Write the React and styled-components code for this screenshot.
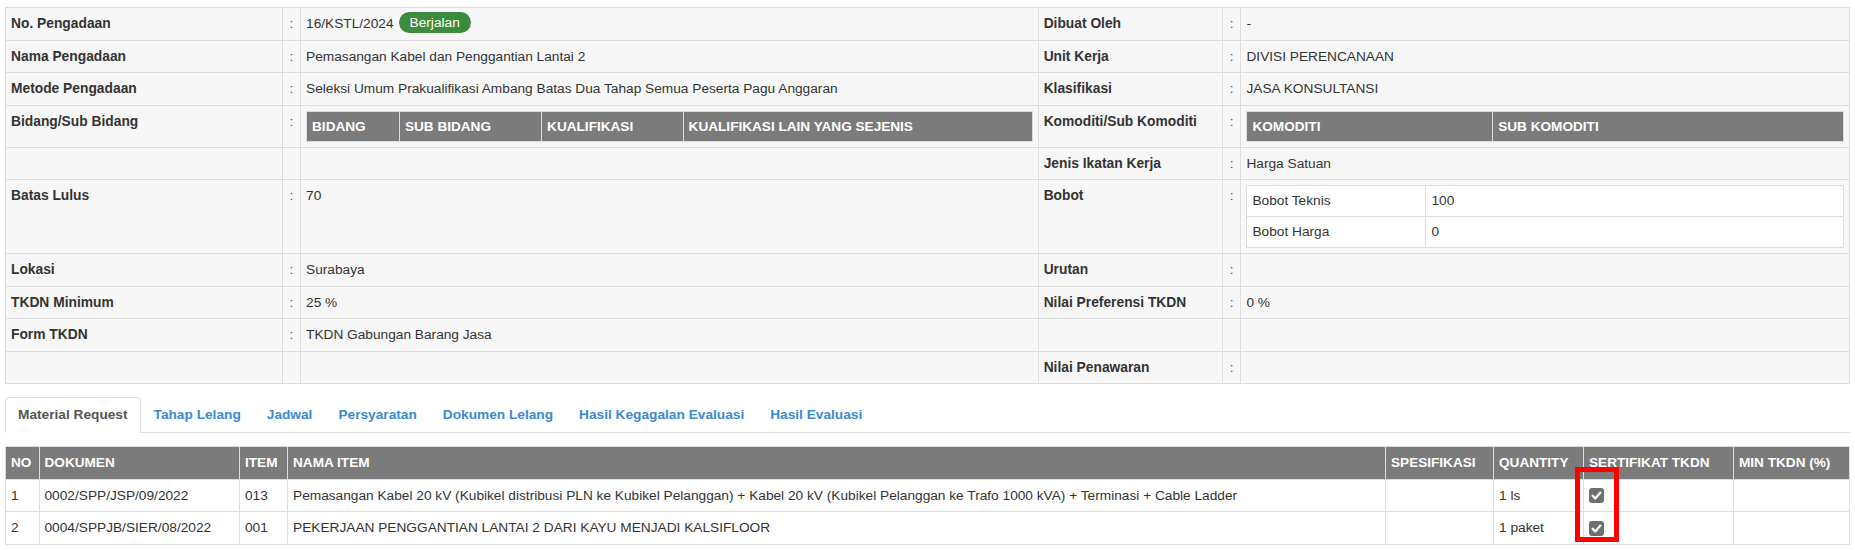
import React from 'react';
import styled, { createGlobalStyle } from 'styled-components';

const GlobalStyle = createGlobalStyle`
  html, body {
    margin: 0;
    padding: 0;
    background: #fff;
  }
  body {
    font-family: "Liberation Sans", Arial, sans-serif;
    font-size: 13.7px;
    line-height: 20px;
    color: #333;
  }
  * { box-sizing: border-box; }
`;

const Page = styled.div`
  padding: 7px 5px 0 5px;
`;

const InfoTable = styled.table`
  width: 100%;
  border-collapse: collapse;
  table-layout: fixed;
  background: #f7f7f7;
  border: 1px solid #ddd;
`;

const Cell = styled.td`
  border: 1px solid #ddd;
  padding: ${p => (p.$nest ? '5px' : '6px 5px 5.5px')};
  vertical-align: top;
  text-align: ${p => (p.$center ? 'center' : 'left')};
  font-weight: ${p => (p.$bold ? 'bold' : 'normal')};
  font-size: ${p => (p.$bold ? '13.8px' : '13.7px')};
  color: ${p => (p.$center ? '#555' : '#333')};
`;

const SubTable = styled.table`
  width: 100%;
  border-collapse: collapse;
  table-layout: fixed;
  background: ${p => (p.$white ? '#fff' : 'transparent')};
  border: 1px solid #ddd;
`;

const SubHead = styled.th`
  background: #7b7b7b;
  color: #fff;
  font-weight: bold;
  font-size: 13.6px;
  text-align: left;
  padding: 5px 5px 4px;
  border: 1px solid #ddd;
`;

const SubCell = styled.td`
  padding: 5px;
  border: 1px solid #ddd;
`;

const Badge = styled.span`
  display: inline-block;
  height: 21px;
  line-height: 21px;
  margin: -2px 0 0 5px;
  padding: 0 11px;
  border-radius: 11px;
  background: #3d8b3d;
  color: #fff;
  font-size: 13.7px;
  vertical-align: top;
`;

const Tabs = styled.ul`
  display: flex;
  list-style: none;
  margin: 13px 0 0;
  padding: 0;
  border-bottom: 1px solid #ddd;
`;

const Tab = styled.li`
  margin: 0 0 -1px 0;
  padding: 7px 12px;
  line-height: 20px;
  font-size: 13.7px;
  font-weight: bold;
  color: ${p => (p.$active ? '#555' : '#3a8ad6')};
  background: ${p => (p.$active ? '#fff' : 'transparent')};
  border: 1px solid ${p => (p.$active ? '#ddd' : 'transparent')};
  border-bottom-color: ${p => (p.$active ? '#fff' : 'transparent')};
  border-radius: 4px 4px 0 0;
`;

const ItemWrap = styled.div`
  position: relative;
  margin-top: 13px;
`;

const ItemTable = styled.table`
  width: 100%;
  border-collapse: collapse;
  table-layout: fixed;
  border: 1px solid #ddd;
`;

const HeadCell = styled.th`
  background: #7b7b7b;
  color: #fff;
  font-size: 13.6px;
  font-weight: bold;
  text-align: left;
  white-space: nowrap;
  padding: 6px 5px 5.5px;
  border: 1px solid #ddd;
`;

const BodyCell = styled.td`
  background: #fff;
  padding: 6px 5px 5.5px;
  border: 1px solid #ddd;
  white-space: nowrap;
`;

const Check = styled.span`
  display: block;
  width: 15px;
  height: 15px;
  border-radius: 3px;
  background: #6f6f6f;
  svg { display: block; }
`;

const Highlight = styled.div`
  position: absolute;
  left: 1570px;
  top: 21px;
  width: 44px;
  height: 75px;
  border: 5px solid #ff0000;
  pointer-events: none;
`;

const CheckBox = () => (
  <Check>
    <svg width="15" height="15" viewBox="0 0 15 15">
      <path d="M3.6 7.8 L6.2 10.4 L11.4 4.6" fill="none" stroke="#fff" strokeWidth="2.3" strokeLinecap="round" strokeLinejoin="round" />
    </svg>
  </Check>
);

const bidangCols = [
  ['BIDANG', '12.8%'],
  ['SUB BIDANG', '19.6%'],
  ['KUALIFIKASI', '19.5%'],
  ['KUALIFIKASI LAIN YANG SEJENIS', '48.1%'],
];

const komoditiCols = [
  ['KOMODITI', '41.2%'],
  ['SUB KOMODITI', '58.8%'],
];

const HeaderOnly = ({ cols }) => (
  <SubTable>
    <colgroup>
      {cols.map(([name, w]) => <col key={name} style={{ width: w }} />)}
    </colgroup>
    <thead>
      <tr>
        {cols.map(([name]) => <SubHead key={name}>{name}</SubHead>)}
      </tr>
    </thead>
  </SubTable>
);

const Bobot = () => (
  <SubTable $white>
    <colgroup>
      <col style={{ width: '30%' }} />
      <col />
    </colgroup>
    <tbody>
      <tr><SubCell>Bobot Teknis</SubCell><SubCell>100</SubCell></tr>
      <tr><SubCell>Bobot Harga</SubCell><SubCell>0</SubCell></tr>
    </tbody>
  </SubTable>
);

const infoRows = [
  { l: 'No. Pengadaan', v: <>16/KSTL/2024<Badge>Berjalan</Badge></>, l2: 'Dibuat Oleh', v2: '-' },
  { l: 'Nama Pengadaan', v: 'Pemasangan Kabel dan Penggantian Lantai 2', l2: 'Unit Kerja', v2: 'DIVISI PERENCANAAN' },
  { l: 'Metode Pengadaan', v: 'Seleksi Umum Prakualifikasi Ambang Batas Dua Tahap Semua Peserta Pagu Anggaran', l2: 'Klasifikasi', v2: 'JASA KONSULTANSI' },
  { l: 'Bidang/Sub Bidang', v: <HeaderOnly cols={bidangCols} />, nest: true, l2: 'Komoditi/Sub Komoditi', v2: <HeaderOnly cols={komoditiCols} />, nest2: true },
  { l: '', v: '', l2: 'Jenis Ikatan Kerja', v2: 'Harga Satuan' },
  { l: 'Batas Lulus', v: '70', l2: 'Bobot', v2: <Bobot />, nest2: true },
  { l: 'Lokasi', v: 'Surabaya', l2: 'Urutan', v2: '' },
  { l: 'TKDN Minimum', v: '25 %', l2: 'Nilai Preferensi TKDN', v2: '0 %' },
  { l: 'Form TKDN', v: 'TKDN Gabungan Barang Jasa', l2: '', v2: '' },
  { l: '', v: '', l2: 'Nilai Penawaran', v2: '' },
];

const tabs = ['Material Request', 'Tahap Lelang', 'Jadwal', 'Persyaratan', 'Dokumen Lelang', 'Hasil Kegagalan Evaluasi', 'Hasil Evaluasi'];

const itemCols = [
  ['NO', '33.5px'],
  ['DOKUMEN', '200.5px'],
  ['ITEM', '48px'],
  ['NAMA ITEM', 'auto'],
  ['SPESIFIKASI', '108px'],
  ['QUANTITY', '90px'],
  ['SERTIFIKAT TKDN', '150px'],
  ['MIN TKDN (%)', '116px'],
];

const items = [
  { no: '1', dok: '0002/SPP/JSP/09/2022', item: '013', nama: 'Pemasangan Kabel 20 kV (Kubikel distribusi PLN ke Kubikel Pelanggan) + Kabel 20 kV (Kubikel Pelanggan ke Trafo 1000 kVA) + Terminasi + Cable Ladder', qty: '1 ls' },
  { no: '2', dok: '0004/SPPJB/SIER/08/2022', item: '001', nama: 'PEKERJAAN PENGGANTIAN LANTAI 2 DARI KAYU MENJADI KALSIFLOOR', qty: '1 paket' },
];

export default function App() {
  return (
    <Page>
      <GlobalStyle />
      <InfoTable>
        <colgroup>
          <col style={{ width: '15%' }} />
          <col style={{ width: '1%' }} />
          <col style={{ width: '40%' }} />
          <col style={{ width: '10%' }} />
          <col style={{ width: '1%' }} />
          <col style={{ width: '33%' }} />
        </colgroup>
        <tbody>
          {infoRows.map((r, i) => (
            <tr key={i}>
              <Cell $bold>{r.l}</Cell>
              <Cell $center>{r.l ? ':' : ''}</Cell>
              <Cell $nest={r.nest}>{r.v}</Cell>
              <Cell $bold>{r.l2}</Cell>
              <Cell $center>{r.l2 ? ':' : ''}</Cell>
              <Cell $nest={r.nest2}>{r.v2}</Cell>
            </tr>
          ))}
        </tbody>
      </InfoTable>

      <Tabs>
        {tabs.map((t, i) => <Tab key={t} $active={i === 0}>{t}</Tab>)}
      </Tabs>

      <ItemWrap>
        <ItemTable>
          <colgroup>
            {itemCols.map(([name, w]) => <col key={name} style={w === 'auto' ? undefined : { width: w }} />)}
          </colgroup>
          <thead>
            <tr>
              {itemCols.map(([name]) => <HeadCell key={name}>{name}</HeadCell>)}
            </tr>
          </thead>
          <tbody>
            {items.map(it => (
              <tr key={it.no}>
                <BodyCell>{it.no}</BodyCell>
                <BodyCell>{it.dok}</BodyCell>
                <BodyCell>{it.item}</BodyCell>
                <BodyCell>{it.nama}</BodyCell>
                <BodyCell></BodyCell>
                <BodyCell>{it.qty}</BodyCell>
                <BodyCell><CheckBox /></BodyCell>
                <BodyCell></BodyCell>
              </tr>
            ))}
          </tbody>
        </ItemTable>
        <Highlight />
      </ItemWrap>
    </Page>
  );
}
